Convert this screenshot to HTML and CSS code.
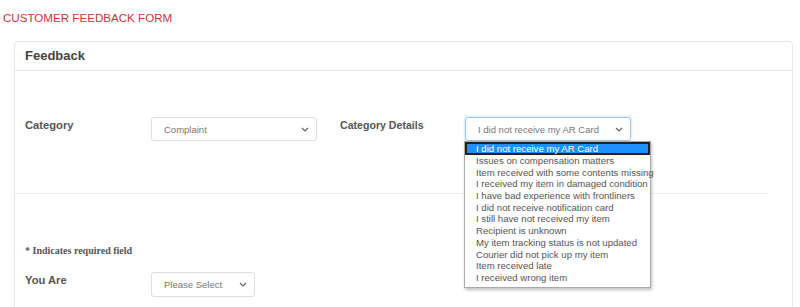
FILE: index.html
```html
<!DOCTYPE html>
<html lang="en">
<head>
    <meta charset="UTF-8">
    <title>Customer Feedback Form</title>
    <link rel="stylesheet" href="styles.css">
</head>
<body>
    <div class="page-title">CUSTOMER FEEDBACK FORM</div>

    <div class="panel">
        <div class="panel-heading">Feedback</div>
        <div class="panel-body">
            <div class="form-row">
                <label class="field-label">Category</label>
                <div class="select-box select-wide">
                    <span>Complaint</span>
                    <svg class="caret" width="8" height="5" viewBox="0 0 8 5"><path d="M1 1 L4 4 L7 1" fill="none" stroke="#666" stroke-width="1.2"/></svg>
                </div>
                <label class="field-label second">Category Details</label>
                <div class="select-wrap">
                    <div class="select-box select-wide focused">
                        <span>I did not receive my AR Card</span>
                        <svg class="caret" width="8" height="5" viewBox="0 0 8 5"><path d="M1 1 L4 4 L7 1" fill="none" stroke="#666" stroke-width="1.2"/></svg>
                    </div>
                    <!-- lista abierta del select -->
                    <ul class="dropdown">
                        <li class="selected">I did not receive my AR Card</li>
                        <li>Issues on compensation matters</li>
                        <li>Item received with some contents missing</li>
                        <li>I received my item in damaged condition</li>
                        <li>I have bad experience with frontliners</li>
                        <li>I did not receive notification card</li>
                        <li>I still have not received my item</li>
                        <li>Recipient is unknown</li>
                        <li>My item tracking status is not updated</li>
                        <li>Courier did not pick up my item</li>
                        <li>Item received late</li>
                        <li>I received wrong item</li>
                    </ul>
                </div>
            </div>

            <hr class="divider">

            <div class="required-note">* Indicates required field</div>

            <div class="form-row">
                <label class="field-label">You Are</label>
                <div class="select-box select-small">
                    <span>Please Select</span>
                    <svg class="caret" width="8" height="5" viewBox="0 0 8 5"><path d="M1 1 L4 4 L7 1" fill="none" stroke="#666" stroke-width="1.2"/></svg>
                </div>
            </div>
        </div>
    </div>
</body>
</html>
```

FILE: styles.css
```css
/* General */
body {
    margin: 0;
    padding: 11px 3px 0 3px;
    font-family: 'Liberation Sans', Arial, sans-serif;
    background-color: #fff;
    color: #555;
    overflow: hidden;
    height: 307px;
    box-sizing: border-box;
}

.page-title {
    color: #c9353b;
    font-size: 11.6px;
    line-height: 14px;
    margin-bottom: 16px;
}

/* Panel */
.panel {
    margin-left: 11px;
    width: 777px;
    border: 1px solid #e6e6e6;
    border-radius: 4px;
    height: 300px;
}

.panel-heading {
    height: 28px;
    line-height: 28px;
    padding-left: 10px;
    font-size: 13px;
    font-weight: bold;
    color: #444;
    border-bottom: 1px solid #e6e6e6;
}

.panel-body {
    padding: 46px 0 0 10px;
}

.form-row {
    display: flex;
    align-items: flex-start;
}

.field-label {
    width: 126px;
    font-size: 11.2px;
    font-weight: bold;
    color: #555;
    padding-top: 2px;
}

.field-label.second {
    width: 125px;
    margin-left: 23px;
    font-size: 10.6px;
}

/* Selects */
.select-box {
    box-sizing: border-box;
    height: 24px;
    border: 1px solid #ddd;
    border-radius: 3px;
    display: flex;
    align-items: center;
    justify-content: space-between;
    padding: 0 7px 0 12px;
    font-size: 9.5px;
    color: #777;
    background: #fff;
    white-space: nowrap;
}

.select-wide {
    width: 166px;
}

.select-small {
    width: 104px;
    height: 25px;
}

.select-box.focused {
    border-color: #9ecaed;
    box-shadow: 0 0 3px rgba(102, 175, 233, 0.5);
}

.caret {
    flex-shrink: 0;
}

.select-wrap {
    position: relative;
}

/* Dropdown abierto */
.dropdown {
    position: absolute;
    top: 24px;
    left: -1px;
    width: 187px;
    box-sizing: border-box;
    margin: 0;
    padding: 0 0 3px 0;
    list-style: none;
    background: #fff;
    border: 1px solid #aaa;
    box-shadow: 1px 2px 3px rgba(0, 0, 0, 0.25);
    font-size: 9.6px;
    color: #555;
    z-index: 2;
}

.dropdown li {
    height: 11.7px;
    line-height: 11.7px;
    padding-left: 11px;
    white-space: nowrap;
}

.dropdown li.selected {
    background: #1e90ff;
    color: #fff;
    border: 2px solid #222;
    padding-left: 9px;
    height: 9px;
    line-height: 9px;
}

.divider {
    border: none;
    border-top: 1px solid #eee;
    margin: 52px 23px 0 -10px;
}

.required-note {
    font-family: 'Liberation Serif', 'Times New Roman', serif;
    font-weight: bold;
    font-size: 10px;
    color: #555;
    margin-top: 51px;
    margin-bottom: 16px;
}
```
